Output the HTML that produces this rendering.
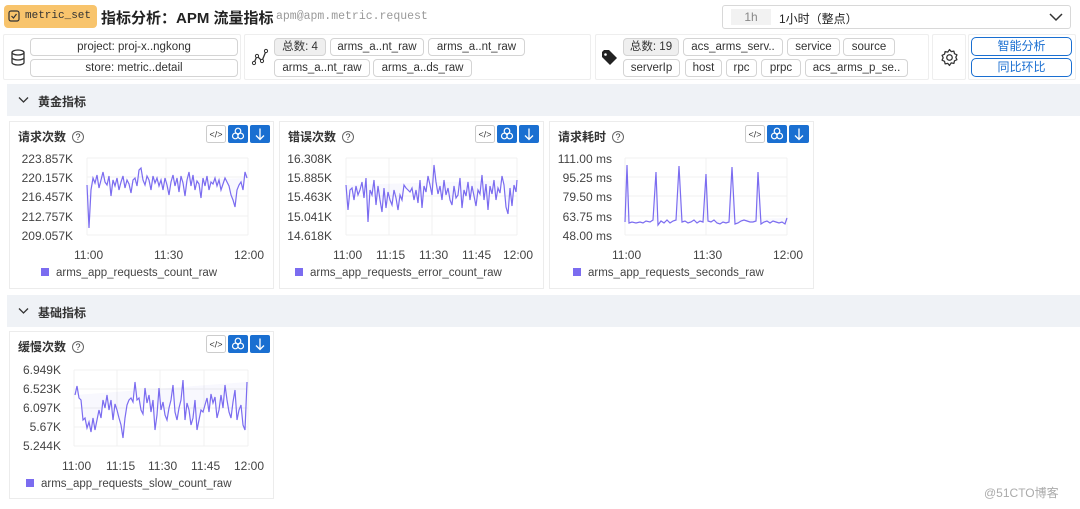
<!DOCTYPE html>
<html><head><meta charset="utf-8">
<style>
*{box-sizing:border-box;margin:0;padding:0}
body{width:1080px;height:509px;background:#fff;font-family:"Liberation Sans","Noto Sans CJK SC",sans-serif;color:#333;position:relative;overflow:hidden;font-size:12px}
.a{position:absolute}
.badge{left:4px;top:5px;width:93px;height:23px;background:#f8c46c;border-radius:4px;font-family:"Liberation Mono",monospace;font-size:11px;color:#333;padding:5px 0 0 21px;white-space:nowrap}
.title{left:101px;top:7px;font-size:15px;font-weight:bold;color:#222}
.sub{left:276px;top:10px;font-family:"Liberation Mono",monospace;font-size:11.5px;color:#999}
.sel{left:722px;top:5px;width:349px;height:24px;border:1px solid #d8d8d8;border-radius:3px;background:#fff}
.box{border:1px solid #eee;border-radius:2px;background:#fff;top:34px;height:46px}
.tag{position:absolute;height:18px;border:1px solid #d4d4d4;border-radius:4px;font-size:11.5px;color:#333;text-align:center;line-height:16px;background:#fff;white-space:nowrap;overflow:hidden}
.tag.g{background:#efefef}
.btn{position:absolute;left:971px;width:101px;height:19px;border:1px solid #1a6fd1;border-radius:5px;color:#1a6fd1;font-size:12px;text-align:center;line-height:17px}
.sec{left:7px;width:1073px;height:32px;background:#eff2f6;font-size:12px;font-weight:bold;color:#333;padding:9px 0 0 31px}
.card{border:1px solid #ececec;background:#fff;height:168px;width:265px}
.ct{position:absolute;left:8px;top:6px;font-size:12px;font-weight:bold;color:#333}
.q{display:inline-block;width:12px;height:12px;border:1px solid #666;border-radius:50%;font-size:9px;line-height:10px;text-align:center;font-weight:normal;margin-left:6px;vertical-align:1px}
.yl{position:absolute;font-size:12px;color:#444;text-align:right}
.xl{position:absolute;font-size:12px;color:#444}
.lg{position:absolute;font-size:11.5px;color:#444}
.lg i{display:inline-block;width:8px;height:8px;background:#7b6cf0;margin-right:7px}
</style></head><body>
<div class="a badge">metric_set</div>
<svg class="a" style="left:8px;top:10px" width="12" height="12" viewBox="0 0 12 12"><rect x="1" y="1" width="10" height="10" rx="2" fill="none" stroke="#333" stroke-width="1.2"/><path d="M3.5 6l2 2 3-4" fill="none" stroke="#333" stroke-width="1.2"/></svg>
<div class="a title">指标分析：APM 流量指标</div>
<div class="a sub">apm@apm.metric.request</div>
<div class="a sel"><div class="a" style="left:8px;top:3px;width:40px;height:16px;background:#f2f2f2;color:#888;text-align:center;line-height:16px;font-size:12px">1h</div><div class="a" style="left:56px;top:4px;font-size:12px;color:#222">1小时（整点）</div>
<svg class="a" style="left:326px;top:6px" width="14" height="10"><path d="M1 2l6 6 6-6" fill="none" stroke="#333" stroke-width="1.5"/></svg></div>

<div class="a box" style="left:3px;width:238px">
<svg class="a" style="left:7px;top:14px" width="14" height="17" viewBox="0 0 14 17"><ellipse cx="7" cy="3.5" rx="6" ry="2.5" fill="none" stroke="#333" stroke-width="1.3"/><path d="M1 3.5v10c0 1.4 2.7 2.5 6 2.5s6-1.1 6-2.5v-10M1 8.5c0 1.4 2.7 2.5 6 2.5s6-1.1 6-2.5" fill="none" stroke="#333" stroke-width="1.3"/></svg></div>
<div class="a box" style="left:244px;width:347px">
<svg class="a" style="left:6px;top:13px" width="18" height="18" viewBox="0 0 18 18"><path d="M3 15l3-7 5 5 4-10" fill="none" stroke="#333" stroke-width="1.3"/><circle cx="3" cy="15" r="1.6" fill="#fff" stroke="#333"/><circle cx="6" cy="8" r="1.6" fill="#fff" stroke="#333"/><circle cx="11" cy="13" r="1.6" fill="#fff" stroke="#333"/><circle cx="15" cy="3" r="1.6" fill="#fff" stroke="#333"/></svg></div>
<div class="a box" style="left:595px;width:334px">
<svg class="a" style="left:5px;top:15px" width="18" height="16" viewBox="0 0 18 16"><path d="M1 2v5l8 8 7-7-8-8H3z" fill="#222"/><circle cx="4.5" cy="4.5" r="1.3" fill="#fff"/></svg></div>
<div class="a box" style="left:932px;width:34px">
<svg class="a" style="left:7px;top:13px" width="19" height="19" viewBox="0 0 24 24"><path d="M12 2l2.2 2.6 3.3-.7.8 3.3 3.1 1.4-1.4 3.1 1.4 3.1-3.1 1.4-.8 3.3-3.3-.7L12 22l-2.2-2.6-3.3.7-.8-3.3-3.1-1.4 1.4-3.1-1.4-3.1 3.1-1.4.8-3.3 3.3.7z" fill="none" stroke="#333" stroke-width="1.6" stroke-linejoin="round"/><circle cx="12" cy="12" r="3.5" fill="none" stroke="#333" stroke-width="1.6"/></svg></div>
<div class="a box" style="left:968px;width:108px"></div>

<div class="tag" style="left:30px;top:38px;width:208px">project: proj-x..ngkong</div>
<div class="tag" style="left:30px;top:59px;width:208px">store: metric..detail</div>

<div class="tag g" style="left:274px;top:38px;width:52px">总数: 4</div>
<div class="tag" style="left:330px;top:38px;width:94px">arms_a..nt_raw</div>
<div class="tag" style="left:428px;top:38px;width:97px">arms_a..nt_raw</div>
<div class="tag" style="left:274px;top:59px;width:96px">arms_a..nt_raw</div>
<div class="tag" style="left:373px;top:59px;width:99px">arms_a..ds_raw</div>

<div class="tag g" style="left:623px;top:38px;width:56px">总数: 19</div>
<div class="tag" style="left:683px;top:38px;width:100px">acs_arms_serv..</div>
<div class="tag" style="left:787px;top:38px;width:53px">service</div>
<div class="tag" style="left:843px;top:38px;width:52px">source</div>
<div class="tag" style="left:623px;top:59px;width:57px">serverIp</div>
<div class="tag" style="left:685px;top:59px;width:37px">host</div>
<div class="tag" style="left:726px;top:59px;width:31px">rpc</div>
<div class="tag" style="left:761px;top:59px;width:40px">prpc</div>
<div class="tag" style="left:805px;top:59px;width:103px">acs_arms_p_se..</div>

<div class="btn" style="top:37px">智能分析</div>
<div class="btn" style="top:58px">同比环比</div>

<div class="a sec" style="top:84px">黄金指标</div>
<svg class="a" style="left:18px;top:96px" width="11" height="8"><path d="M1 1.5l4.5 4.5 4.5-4.5" fill="none" stroke="#333" stroke-width="1.3"/></svg>
<div class="a sec" style="top:295px">基础指标</div>
<svg class="a" style="left:18px;top:307px" width="11" height="8"><path d="M1 1.5l4.5 4.5 4.5-4.5" fill="none" stroke="#333" stroke-width="1.3"/></svg>

<div class="a card" style="left:9px;top:121px"><div class="ct">请求次数<span class="q">?</span></div></div>
<div class="a card" style="left:279px;top:121px"><div class="ct">错误次数<span class="q">?</span></div></div>
<div class="a card" style="left:549px;top:121px"><div class="ct">请求耗时<span class="q">?</span></div></div>
<div class="a card" style="left:9px;top:331px"><div class="ct">缓慢次数<span class="q">?</span></div></div>

<svg class="a" style="left:0;top:0" width="1080" height="509">
<defs>
<g id="ic"><rect x="0.5" y="0.5" width="19" height="17" rx="2" fill="#fff" stroke="#ccc"/><text x="10" y="12.5" font-size="9" text-anchor="middle" fill="#333" font-family="Liberation Sans">&lt;/&gt;</text>
<rect x="22" y="0" width="20" height="18" rx="2" fill="#1a6fd1"/><circle cx="32" cy="6" r="2.8" fill="none" stroke="#fff" stroke-width="1.2"/><circle cx="29.3" cy="11" r="2.8" fill="none" stroke="#fff" stroke-width="1.2"/><circle cx="34.7" cy="11" r="2.8" fill="none" stroke="#fff" stroke-width="1.2"/>
<rect x="44" y="0" width="20" height="18" rx="2" fill="#1a6fd1"/><path d="M54 3.5v11M50 10.5l4 4 4-4" fill="none" stroke="#fff" stroke-width="1.3"/></g>
</defs>
<use href="#ic" x="206" y="125"/><use href="#ic" x="475" y="125"/><use href="#ic" x="745" y="125"/><use href="#ic" x="206" y="335"/>
<g stroke="#f0f0f0" stroke-width="1">
<path d="M87 158H248M87 177H248M87 196H248M87 216H248M87 235H248M87 158V235M166 158V235M248 158V235"/>
<path d="M346 158H517M346 177H517M346 196H517M346 216H517M346 235H517M346 158V235M389 158V235M432 158V235M475 158V235M517 158V235"/>
<path d="M625 158H787M625 177H787M625 196H787M625 216H787M625 235H787M625 158V235M706 158V235M787 158V235"/>
<path d="M74 370H248M74 389H248M74 408H248M74 427H248M74 446H248M74 370V446M117 370V446M160 370V446M204 370V446M248 370V446"/>
</g>
<g fill="none" stroke="#7b6cf0" stroke-width="1.2">
<polyline fill="#7b6cf0" fill-opacity="0.05" points="87,185 89,228 91,190 93,178 95,183 97,175 99,188 101,180 103,172 105,182 107,185 109,176 111,196 113,180 115,186 117,178 119,190 121,182 123,176 125,188 127,180 129,184 131,193 133,180 135,178 137,186 139,170 141,168 143,180 145,185 147,176 149,180 151,190 153,176 155,183 157,178 159,186 161,180 163,190 165,178 167,185 169,195 171,182 173,175 175,186 177,178 179,192 181,176 183,183 185,196 187,180 189,172 191,186 193,175 195,190 197,181 199,184 201,198 203,178 205,186 207,176 209,190 211,182 213,184 215,178 217,186 219,180 221,190 223,184 225,178 227,182 229,186 231,195 233,200 235,207 237,190 239,185 241,182 243,190 245,172 247,178"/>
<polyline fill="#7b6cf0" fill-opacity="0.05" points="346,185 348,210 350,190 352,188 354,200 356,186 358,195 360,190 362,182 364,198 366,178 368,222 370,190 372,195 374,180 376,205 378,186 380,200 382,212 384,188 386,208 388,192 390,200 392,205 394,190 396,198 398,210 400,195 402,200 404,185 406,188 408,190 410,192 412,188 414,200 416,190 418,203 420,180 422,208 424,186 426,192 428,176 430,185 432,195 434,165 436,182 438,194 440,186 442,200 444,180 446,195 448,188 450,200 452,205 454,186 456,198 458,195 460,178 462,208 464,190 466,196 468,182 470,200 472,186 474,196 476,206 478,190 480,194 482,175 484,200 486,184 488,210 490,186 492,194 494,180 496,200 498,188 500,193 502,176 504,185 506,207 508,214 510,188 512,206 514,185 516,192 517,180"/>
<polyline fill="#7b6cf0" fill-opacity="0.05" points="625,222 627,165 629,223 632,222 636,223 640,222 643,223 646,221 650,222 653,220 656,172 658,225 661,221 664,223 667,220 670,223 673,221 676,220 679,166 682,222 685,221 688,223 691,222 694,220 697,223 700,221 703,222 706,174 708,221 711,222 714,220 717,223 720,224 723,222 726,223 729,222 732,167 735,224 738,223 741,221 744,220 747,221 750,222 753,222 756,221 758,172 761,224 764,222 767,221 770,223 773,221 776,222 779,223 782,222 785,224 787,218"/>
<polyline fill="#7b6cf0" fill-opacity="0.05" points="75,395 77,386 79,398 81,400 83,420 85,418 87,428 89,422 91,432 93,418 95,430 97,420 99,410 101,418 103,400 105,408 107,395 109,410 111,400 113,420 115,404 117,410 119,418 121,425 123,438 125,418 127,405 129,400 131,398 133,402 135,382 137,400 139,398 141,410 143,414 145,388 147,403 149,395 151,412 153,400 155,430 157,415 159,388 161,410 163,402 165,415 167,420 169,408 171,400 173,385 175,412 177,420 179,408 181,400 183,380 185,420 187,403 189,410 191,425 193,418 195,400 197,430 199,420 201,410 203,412 205,405 207,398 209,412 211,394 213,403 215,397 217,418 219,410 221,395 223,408 225,385 227,400 229,412 231,418 233,402 235,390 237,420 239,410 241,405 243,425 245,430 247,382"/>
</g>
</svg>

<div class="yl" style="left:10px;top:152px;width:63px">223.857K</div>
<div class="yl" style="left:10px;top:171px;width:63px">220.157K</div>
<div class="yl" style="left:10px;top:190px;width:63px">216.457K</div>
<div class="yl" style="left:10px;top:210px;width:63px">212.757K</div>
<div class="yl" style="left:10px;top:229px;width:63px">209.057K</div>
<div class="xl" style="left:74px;top:248px">11:00</div><div class="xl" style="left:154px;top:248px">11:30</div><div class="xl" style="left:234px;top:248px">12:00</div>
<div class="lg" style="left:41px;top:267px"><i></i>arms_app_requests_count_raw</div>
<div class="yl" style="left:280px;top:152px;width:52px">16.308K</div>
<div class="yl" style="left:280px;top:171px;width:52px">15.885K</div>
<div class="yl" style="left:280px;top:190px;width:52px">15.463K</div>
<div class="yl" style="left:280px;top:210px;width:52px">15.041K</div>
<div class="yl" style="left:280px;top:229px;width:52px">14.618K</div>
<div class="xl" style="left:333px;top:248px">11:00</div><div class="xl" style="left:376px;top:248px">11:15</div><div class="xl" style="left:419px;top:248px">11:30</div><div class="xl" style="left:462px;top:248px">11:45</div><div class="xl" style="left:503px;top:248px">12:00</div>
<div class="lg" style="left:295px;top:267px"><i></i>arms_app_requests_error_count_raw</div>
<div class="yl" style="left:550px;top:152px;width:62px">111.00 ms</div>
<div class="yl" style="left:550px;top:171px;width:62px">95.25 ms</div>
<div class="yl" style="left:550px;top:190px;width:62px">79.50 ms</div>
<div class="yl" style="left:550px;top:210px;width:62px">63.75 ms</div>
<div class="yl" style="left:550px;top:229px;width:62px">48.00 ms</div>
<div class="xl" style="left:612px;top:248px">11:00</div><div class="xl" style="left:693px;top:248px">11:30</div><div class="xl" style="left:773px;top:248px">12:00</div>
<div class="lg" style="left:573px;top:267px"><i></i>arms_app_requests_seconds_raw</div>
<div class="yl" style="left:10px;top:363px;width:51px">6.949K</div>
<div class="yl" style="left:10px;top:382px;width:51px">6.523K</div>
<div class="yl" style="left:10px;top:401px;width:51px">6.097K</div>
<div class="yl" style="left:10px;top:420px;width:51px">5.67K</div>
<div class="yl" style="left:10px;top:439px;width:51px">5.244K</div>
<div class="xl" style="left:62px;top:459px">11:00</div><div class="xl" style="left:106px;top:459px">11:15</div><div class="xl" style="left:148px;top:459px">11:30</div><div class="xl" style="left:191px;top:459px">11:45</div><div class="xl" style="left:234px;top:459px">12:00</div>
<div class="lg" style="left:26px;top:478px"><i></i>arms_app_requests_slow_count_raw</div>
<div class="a" style="left:984px;top:484px;font-size:12px;color:#aaa">@51CTO博客</div>
</body></html>
